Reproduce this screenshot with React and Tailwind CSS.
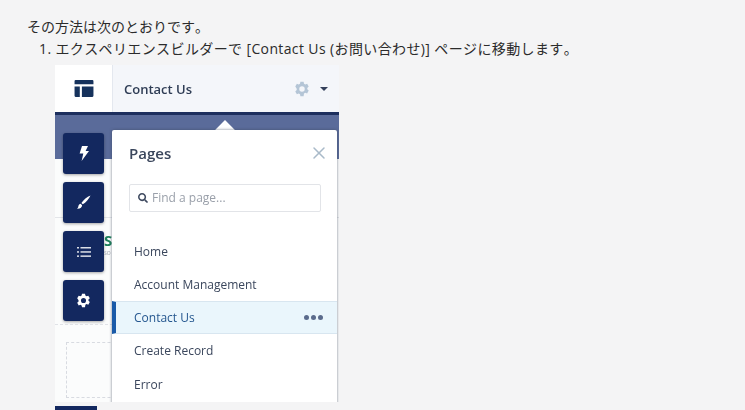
import React from 'react';
import { FaSearch } from 'react-icons/fa';
import { X } from 'lucide-react';

const pages = ['Home', 'Account Management'];

const fontStack = "font-['Open_Sans','Noto_Sans_CJK_JP',sans-serif]";

// hex shaped setup gear
const Gear = ({ size, className }) => (
  <svg width={size} height={size} viewBox="0 0 20 20" className={className}>
    <path
      fill="currentColor"
      fillRule="evenodd"
      d="M8 1h4l.5 2.4 1.6.9L16.4 3.5l2 3.5-1.8 1.6v1.8l1.8 1.6-2 3.5-2.3-.8-1.6.9L12 19H8l-.5-2.4-1.6-.9-2.3.8-2-3.5 1.8-1.6V9.6L1.6 7l2-3.5 2.3.8 1.6-.9zM10 6.6a3.4 3.4 0 1 0 0 6.8 3.4 3.4 0 0 0 0-6.8z"
    />
  </svg>
);

const Bolt = () => (
  <svg width="14" height="15" viewBox="0 0 14 15">
    <path fill="currentColor" d="M5 0h6L8.6 5H12L4.6 15l1.7-7.4H2.6z" />
  </svg>
);

const Brush = () => (
  <svg width="15" height="15" viewBox="0 0 15 15">
    <path fill="currentColor" d="M14.5.5C13 4 9.800 7.500 6.800 9.300L5.400 7.900C7.500 5 11 1.800 14.500.5zM4.600 8.700l1.500 1.500c0 2-1.700 3.800-5.100 3.600 1.300-.9 1.200-1.900 1.500-3 .3-1.200 1-1.900 2.100-2.100z" />
  </svg>
);

const ListIcon = () => (
  <svg width="14" height="12" viewBox="0 0 14 12">
    <g fill="currentColor" opacity="0.85">
      <rect x="0" y="1" width="2" height="1.500" />
      <rect x="3.500" y="1" width="10.500" height="1.500" />
      <rect x="0" y="5.200" width="2" height="1.500" />
      <rect x="3.500" y="5.200" width="10.500" height="1.500" />
      <rect x="0" y="9.400" width="2" height="1.500" />
      <rect x="3.500" y="9.400" width="10.500" height="1.500" />
    </g>
  </svg>
);

const tools = [<Bolt key="bolt" />, <Brush key="brush" />, <ListIcon key="list" />, <Gear key="gear" size={15} />];

const App = () => {
  return (
    <div className={`h-[410px] w-[745px] overflow-hidden bg-[#f4f4f5] pt-[16px] text-[14px] leading-[22px] text-[#2b2b2b] [font-kerning:none] ${fontStack}`}>
      <p className="pl-[27px]">その方法は次のとおりです。</p>
      <p className="pl-[39px] tracking-[0.38px]">1. エクスペリエンスビルダーで [Contact Us (お問い合わせ)] ページに移動します。</p>

      <div className="relative ml-[55px] mt-[5px] h-[337px] w-[284px] overflow-hidden bg-[#fbfcfc] blur-[0.4px] [font-kerning:normal]">
        {/* top bar */}
        <div className="flex h-[47px] bg-[#f4f6fa]">
          <div className="flex w-[58px] items-center justify-center border-r border-[#e4e8ef] bg-white">
            <svg width="22" height="21" viewBox="0 0 20 20" className="text-[#16325c]">
              <path fill="currentColor" d="M1 3a1 1 0 0 1 1-1h16a1 1 0 0 1 1 1v3H1zM1 8h5v10H2a1 1 0 0 1-1-1zM8 8h11v9a1 1 0 0 1-1 1H8z" />
            </svg>
          </div>
          <div className="flex flex-1 items-center pl-[11px] pr-[11px]">
            <span className="text-[13px] font-semibold text-[#2f3d55]">Contact Us</span>
            <Gear size={16} className="ml-auto text-[#b4c5d6]" />
            <span className="ml-[10px] h-0 w-0 border-x-[4px] border-t-[4px] border-x-transparent border-t-[#34405a]" />
          </div>
        </div>

        {/* navy band */}
        <div className="h-[3px] bg-[#1d2f5e]" />
        <div className="h-[44px] bg-[#5a6b9a]" />
        <div className="mt-[58px] h-px bg-[#e3e5e9]" />

        {/* left tool buttons */}
        <div className="absolute left-[8px] top-[68px] flex flex-col gap-[8px]">
          {tools.map((icon, i) => (
            <div key={i} className="flex h-[41px] w-[41px] items-center justify-center rounded-[3px] bg-[#13285f] text-white shadow-[0_1px_3px_rgba(0,0,0,0.35)]">
              {icon}
            </div>
          ))}
        </div>

        {/* logo peeking out behind the panel */}
        <span className="absolute left-[49px] top-[168px] text-[15px] font-bold leading-none text-[#1d7f5a]">S</span>
        <span className="absolute left-[49px] top-[186px] text-[5px] leading-none text-[#9aa0aa]">SO</span>

        {/* empty drop zone */}
        <div className="absolute left-0 top-[259px] w-[58px] border-t border-dashed border-[#e0e2e7]" />
        <div className="absolute left-[11px] top-[277px] h-[56px] w-[60px] border border-dashed border-[#d8dbe1]" />

        {/* arrow */}
        <div className="absolute left-[163px] top-[58px] h-[14px] w-[14px] rotate-45 bg-white" />

        {/* pages panel */}
        <div className="absolute left-[57px] top-[65px] h-[280px] w-[225px] rounded-t-[2px] bg-white shadow-[0_0_3px_rgba(60,70,90,0.7)]">
          <div className="flex h-[46px] items-center pl-[17px] pr-[8px]">
            <span className="text-[15px] font-semibold text-[#3a465c]">Pages</span>
            <X size={20} strokeWidth={1.8} className="ml-auto text-[#a9bac9]" />
          </div>
          <div className="ml-[17px] mr-[16px] mt-[8px] flex h-[28px] items-center gap-[4px] rounded-[2px] border border-[#e2e4e8] pl-[8px] text-[12px] text-[#9aa0aa]">
            <FaSearch size={10} className="text-[#3f4a60]" />
            <span>Find a page...</span>
          </div>

          <div className="mt-[23px] text-[12px] text-[#3a465c]">
            {pages.map((page) => (
              <div key={page} className="flex h-[33px] items-center pl-[22px]">{page}</div>
            ))}
            <div className="flex h-[33px] items-center border-y border-[#d8e6f0] border-l-[4px] border-l-[#1a5aa8] bg-[#eaf6fc] pl-[18px] pr-[14px] text-[#25578f]">
              <span>Contact Us</span>
              <span className="ml-auto flex gap-[2px]">
                <span className="h-[5px] w-[5px] rounded-full bg-[#5a6b8c]" />
                <span className="h-[5px] w-[5px] rounded-full bg-[#5a6b8c]" />
                <span className="h-[5px] w-[5px] rounded-full bg-[#5a6b8c]" />
              </span>
            </div>
            <div className="flex h-[34px] items-center pl-[22px]">Create Record</div>
            <div className="flex h-[33px] items-center pl-[22px]">Error</div>
          </div>
        </div>
      </div>

      {/* top of the next screenshot */}
      <div className="ml-[55px] mt-[4px] h-[10px] w-[42px] bg-[#13285f]" />
    </div>
  );
};

export default App;
